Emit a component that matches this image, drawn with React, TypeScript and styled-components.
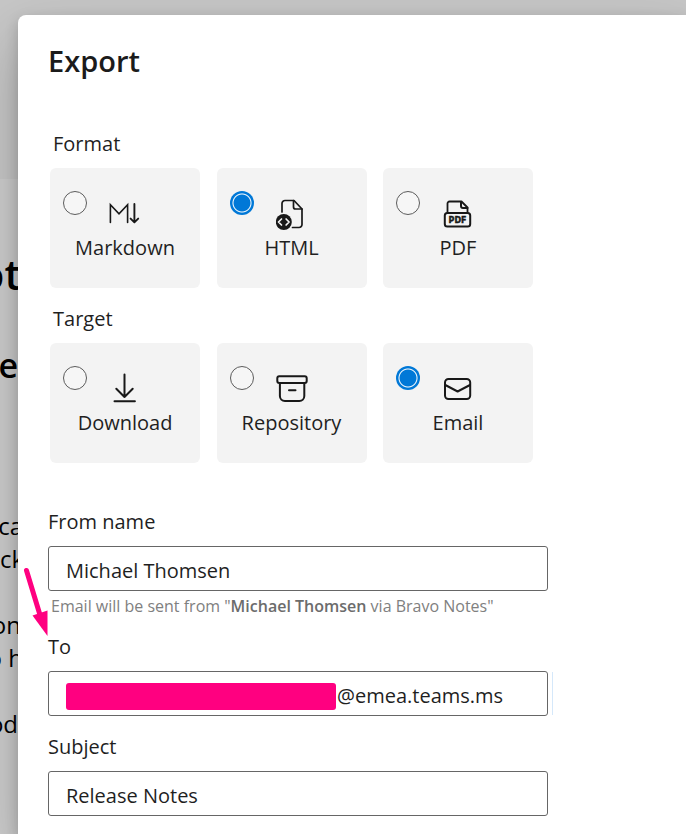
import React, { useState } from "react";
import styled, { createGlobalStyle } from "styled-components";

const GlobalStyle = createGlobalStyle`
  * {
    box-sizing: border-box;
  }
  html, body {
    margin: 0;
    height: 100%;
    overflow: hidden;
  }
  #root {
    height: 100%;
  }
  body, input {
    font-family: "Segoe UI", "Open Sans", "Noto Sans", sans-serif;
    color: #1f1f1f;
  }
`;

const Page = styled.div`
  position: relative;
  display: grid;
  grid-template-columns: 18px minmax(0, 1fr);
  min-height: 100%;
  overflow: hidden;
  background: linear-gradient(#c6c6c6 0 179px, #cdcdcd 179px);
`;

const Backdrop = styled.div`
  padding-top: 242px;
  overflow: hidden;
  color: #000;
`;

const BackLine = styled.div<{ $size: number; $height: number; $gap?: number; $weight?: number; $under?: number }>`
  display: flex;
  justify-content: flex-end;
  white-space: pre;
  font-size: ${(p) => p.$size}px;
  line-height: ${(p) => p.$height}px;
  font-weight: ${(p) => p.$weight ?? 400};
  margin-top: ${(p) => p.$gap ?? 0}px;
  margin-right: -${(p) => p.$under ?? 0}px;
`;

const Dialog = styled.main`
  margin-top: 15px;
  padding: 26px 30px 18px;
  background: #fff;
  border-top-left-radius: 8px;
  box-shadow: 0 26px 58px rgba(0, 0, 0, 0.22), 0 5px 14px rgba(0, 0, 0, 0.18);
`;

const Title = styled.h1`
  margin: 0 0 48px;
  font-size: 29px;
  line-height: 40px;
  font-weight: 600;
  color: #1b1b1b;
`;

const Form = styled.form`
  display: flex;
  flex-direction: column;
  max-width: 500px;
`;

const Group = styled.fieldset`
  width: 100%;
  min-width: 0;
  max-width: 485px;
  margin: 0 0 16px;
  padding: 0 0 0 2px;
  border: 0;
`;

const Legend = styled.legend`
  padding: 0 0 9px 3px;
  font-size: 20px;
  line-height: 30px;
`;

const Cards = styled.div`
  display: grid;
  grid-template-columns: repeat(3, minmax(0, 150px));
  justify-content: space-between;
`;

const Card = styled.label`
  position: relative;
  display: flex;
  flex-direction: column;
  align-items: center;
  height: 120px;
  padding-top: 30px;
  border-radius: 6px;
  background: #f3f3f3;
  font-size: 20px;
  line-height: 30px;
  cursor: pointer;
`;

const Radio = styled.input`
  position: absolute;
  top: 23px;
  left: 13px;
  width: 24px;
  height: 24px;
  margin: 0;
  appearance: none;
  border: 1px solid #5c5c5c;
  border-radius: 50%;
  background: #f6f6f6;

  &:checked {
    border: 0;
    background: radial-gradient(circle, #0078d7 8px, #fff 9px, #0078d7 10px);
  }
`;

const Icon = styled.svg`
  width: 32px;
  height: 32px;
  margin-bottom: 3px;
  fill: none;
  stroke: #181818;
  stroke-width: 2;
  stroke-linecap: round;
  stroke-linejoin: round;
`;

const IconText = styled.text`
  font: 700 8px "DejaVu Sans", sans-serif;
  fill: #181818;
  stroke: #181818;
  stroke-width: 0.4;
`;

const Fields = styled.div`
  display: flex;
  flex-direction: column;
  gap: 16px;
  padding-top: 28px;
`;

const Field = styled.div`
  display: flex;
  flex-direction: column;
`;

const Label = styled.label`
  margin-bottom: 9px;
  font-size: 20px;
  line-height: 30px;
`;

const InputBox = styled.div<{ $edge?: boolean }>`
  position: relative;
  display: flex;
  align-items: center;
  height: 45px;
  padding: 4px 17px 0;
  border: 1px solid #666;
  border-radius: 3px;

  &::after {
    content: ${(p) => (p.$edge ? '""' : "none")};
    position: absolute;
    top: 0;
    right: -6px;
    bottom: 0;
    width: 1px;
    background: #d5e8fa;
  }
`;

const TextInput = styled.input`
  flex: 1;
  min-width: 0;
  height: 100%;
  padding: 0;
  border: 0;
  outline: 0;
  background: transparent;
  font-size: 20px;
`;

const Redaction = styled.span`
  flex: 0 0 270px;
  height: 27px;
  margin-top: 1px;
  margin-right: 1px;
  border-radius: 3px;
  background: #ff0080;
`;

const Hint = styled.p`
  margin: 5px 0 0;
  padding-left: 3px;
  font-size: 16px;
  line-height: 20px;
  color: #808080;

  strong {
    color: #6c6c6c;
    font-weight: 600;
  }
`;

const Pointer = styled.svg`
  position: absolute;
  top: 565px;
  left: 22px;
  width: 30px;
  height: 74px;
  pointer-events: none;
`;

const MarkdownIcon = () => (
  <Icon viewBox="0 0 32 32" aria-hidden="true">
    <path d="M1.400 24.500V6.700l8.600 9.200 8.600-9.200v17.800" strokeWidth="1.6" strokeLinejoin="miter" />
    <path d="M25.400 6v18.200M21.600 20.600l3.800 3.800 3.800-3.800" strokeWidth="1.9" />
  </Icon>
);

const HtmlIcon = () => (
  <Icon viewBox="0 0 32 32" aria-hidden="true">
    <path d="M6 14V5.500a3 3 0 0 1 3-3h9l8 8.500v15.500a3 3 0 0 1-3 3h-6.500" strokeWidth="1.7" />
    <path d="M17.500 2.500V9a2 2 0 0 0 2 2H26" strokeWidth="1.7" />
    <circle cx="7.800" cy="24" r="8" fill="#181818" stroke="none" />
    <path d="M5.500 21 2.500 24l3 3M10.100 21l3 3-3 3" stroke="#f3f3f3" strokeWidth="1.7" />
  </Icon>
);

const PdfIcon = () => (
  <Icon viewBox="0 0 32 32" aria-hidden="true">
    <rect x="2.800" y="15" width="25.400" height="13.600" rx="2.500" />
    <path d="M5.500 15V5.500a2 2 0 0 1 2-2h12l6 6V15" strokeWidth="1.8" />
    <path d="M19 4v4a2 2 0 0 0 2 2h4.500" />
    <IconText x="15.500" y="24.800" textAnchor="middle">PDF</IconText>
  </Icon>
);

const DownloadIcon = () => (
  <Icon viewBox="0 0 32 32" aria-hidden="true">
    <path d="M15.500 1.500v22.500M7.300 15.800l8.200 8.200 8.200-8.200M5.500 28.200h20.400" />
  </Icon>
);

const RepositoryIcon = () => (
  <Icon viewBox="0 0 32 32" aria-hidden="true">
    <rect x="1.300" y="3.300" width="29.400" height="6.600" rx="2" />
    <path d="M3.900 10v13a5 5 0 0 0 5 5h14.400a5 5 0 0 0 5-5V10M13 17.200h6.500" />
  </Icon>
);

const EmailIcon = () => (
  <Icon viewBox="0 0 32 32" aria-hidden="true">
    <rect x="3" y="6" width="25.200" height="20" rx="3.500" />
    <path d="m3.300 12 12.300 6.500L28 12" />
  </Icon>
);

interface Option {
  name: string;
  Glyph: () => React.ReactElement;
}

const formats: Option[] = [
  { name: "Markdown", Glyph: MarkdownIcon },
  { name: "HTML", Glyph: HtmlIcon },
  { name: "PDF", Glyph: PdfIcon },
];

const targets: Option[] = [
  { name: "Download", Glyph: DownloadIcon },
  { name: "Repository", Glyph: RepositoryIcon },
  { name: "Email", Glyph: EmailIcon },
];

interface ChoiceGroupProps {
  title: string;
  options: Option[];
  initial: string;
}

function ChoiceGroup({ title, options, initial }: ChoiceGroupProps) {
  const [selected, setSelected] = useState(initial);
  return (
    <Group>
      <Legend>{title}</Legend>
      <Cards>
        {options.map(({ name, Glyph }) => (
          <Card key={name}>
            <Radio
              type="radio"
              name={title}
              value={name}
              checked={selected === name}
              onChange={() => setSelected(name)}
            />
            <Glyph />
            {name}
          </Card>
        ))}
      </Cards>
    </Group>
  );
}

export default function App() {
  return (
    <>
      <GlobalStyle />
      <Page>
        <Backdrop aria-hidden="true">
          <BackLine $size={42} $height={64} $weight={600} $under={3}>ot</BackLine>
          <BackLine $size={34} $height={50} $gap={34} $weight={600}>e</BackLine>
          <BackLine $size={24} $height={33} $gap={119} $under={5}>ca</BackLine>
          <BackLine $size={24} $height={33} $under={6}>ck</BackLine>
          <BackLine $size={24} $height={33} $gap={33} $under={3}>on</BackLine>
          <BackLine $size={24} $height={33} $under={5}>o h</BackLine>
          <BackLine $size={24} $height={33} $gap={33}>od</BackLine>
        </Backdrop>
        <Dialog role="dialog" aria-labelledby="export-title">
          <Title id="export-title">Export</Title>
          <Form onSubmit={(e) => e.preventDefault()}>
            <ChoiceGroup title="Format" options={formats} initial="HTML" />
            <ChoiceGroup title="Target" options={targets} initial="Email" />
            <Fields>
              <Field>
                <Label htmlFor="from-name">From name</Label>
                <InputBox>
                  <TextInput id="from-name" defaultValue="Michael Thomsen" />
                </InputBox>
                <Hint>
                  Email will be sent from "<strong>Michael Thomsen</strong> via Bravo Notes"
                </Hint>
              </Field>
              <Field>
                <Label htmlFor="to">To</Label>
                <InputBox $edge>
                  <Redaction />
                  <TextInput id="to" defaultValue="@emea.teams.ms" />
                </InputBox>
              </Field>
              <Field>
                <Label htmlFor="subject">Subject</Label>
                <InputBox>
                  <TextInput id="subject" defaultValue="Release Notes" />
                </InputBox>
              </Field>
            </Fields>
          </Form>
        </Dialog>
        <Pointer viewBox="0 0 30 74" aria-hidden="true">
          <path d="M4.500 5.500 18 50" stroke="#ff0080" strokeWidth="5" strokeLinecap="round" />
          <path d="M10.500 50.500 25.500 45.500V71z" fill="#ff0080" />
        </Pointer>
      </Page>
    </>
  );
}
